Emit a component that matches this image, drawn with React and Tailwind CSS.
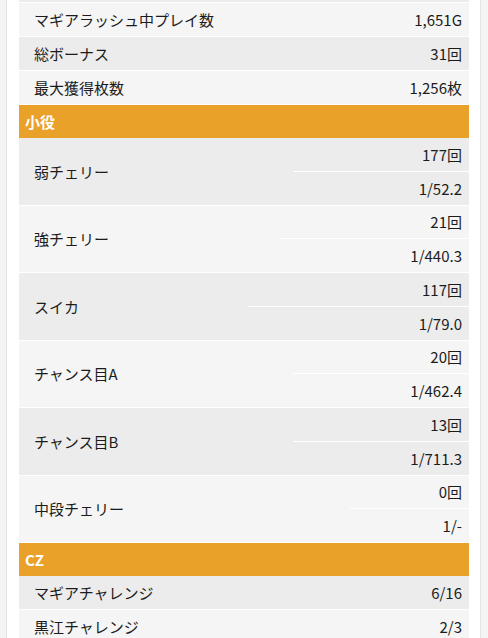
import React from "react";

const font = { fontFamily: '"Noto Sans CJK JP", "Noto Sans", sans-serif' };

function Single({ label, value, dark }) {
  return (
    <div className={`flex h-[34px] border-b border-white ${dark ? "bg-[#ececec]" : "bg-[#f5f5f5]"}`}>
      <div className="flex flex-1 items-center pl-[15px]">{label}</div>
      <div className="flex items-center pr-[7px]">{value}</div>
    </div>
  );
}

function Double({ label, count, prob, dark, w }) {
  return (
    <div className={`flex h-[67.5px] border-b border-white ${dark ? "bg-[#ececec]" : "bg-[#f5f5f5]"}`}>
      <div className="flex flex-1 items-center pl-[15px]">{label}</div>
      <div className={`flex flex-col ${w}`}>
        <div className="flex flex-1 items-center justify-end border-b border-white pr-[7px]">{count}</div>
        <div className="flex flex-1 items-center justify-end pr-[7px]">{prob}</div>
      </div>
    </div>
  );
}

function Header({ label }) {
  return (
    <div className="flex h-[33px] items-center bg-[#e9a12a] pl-[6px] font-bold text-white">
      {label}
    </div>
  );
}

export default function App() {
  return (
    <div className="h-[638px] overflow-hidden bg-[#f4f4f4] pl-[6px] pr-[7px]" style={font}>
      <div className="h-full border-x border-[#e4e4e4] bg-white pl-[12px] pr-[11px] text-[15px] leading-none text-[#1c1c1c]">
        <div className="h-[3px] border-b border-white bg-[#ececec]" />
        <Single label="マギアラッシュ中プレイ数" value="1,651G" />
        <Single label="総ボーナス" value="31回" dark />
        <Single label="最大獲得枚数" value="1,256枚" />
        <Header label="小役" />
        <Double label="弱チェリー" count="177回" prob="1/52.2" dark w="w-[176px]" />
        <Double label="強チェリー" count="21回" prob="1/440.3" w="w-[189px]" />
        <Double label="スイカ" count="117回" prob="1/79.0" dark w="w-[221px]" />
        <Double label="チャンス目A" count="20回" prob="1/462.4" w="w-[176px]" />
        <Double label="チャンス目B" count="13回" prob="1/711.3" dark w="w-[176px]" />
        <Double label="中段チェリー" count="0回" prob="1/-" w="w-[119px]" />
        <Header label="CZ" />
        <Single label="マギアチャレンジ" value="6/16" dark />
        <Single label="黒江チャレンジ" value="2/3" />
      </div>
    </div>
  );
}
